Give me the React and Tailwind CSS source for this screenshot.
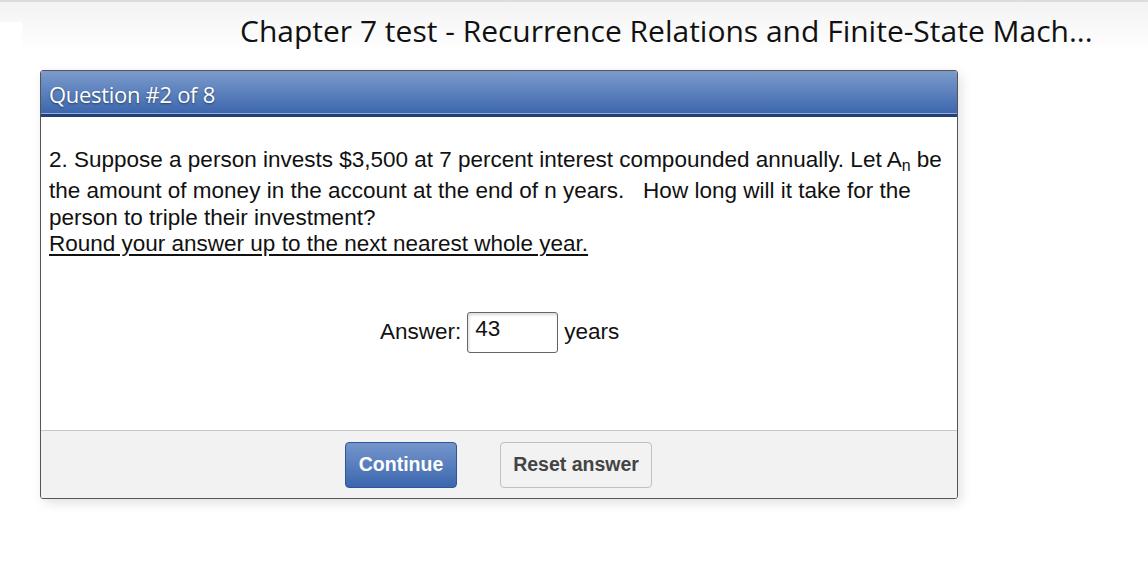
import React from "react";

export default function App() {
  return (
    <div className="w-[1148px] h-[566px] bg-white relative overflow-hidden" style={{ fontFamily: "Arial, 'Liberation Sans', sans-serif" }}>
      <div className="h-[2px] bg-[#dcdcdc]" />
      <div className="h-[48px] bg-gradient-to-b from-[#f3f3f3] to-white flex items-start relative">
        <div className="absolute left-0 top-[20px] w-[22px] h-[26px] bg-white" />
        <h1 className="ml-[240px] mt-[10px] text-[30px] leading-[38px] text-[#111] font-['Open_Sans','Noto_Sans',sans-serif] whitespace-nowrap">
          Chapter 7 test - Recurrence Relations and Finite-State Mach...
        </h1>
      </div>

      <div className="ml-[40px] mt-[20px] w-[918px] h-[429px] border border-[#555] rounded-[3px] shadow-[3px_4px_12px_rgba(0,0,0,0.12)] flex flex-col overflow-hidden">
        <div className="h-[46px] shrink-0 bg-gradient-to-b from-[#7b9bcb] to-[#3c66ad] border-b-[3px] border-[#243f77] relative flex items-center">
          <div className="absolute left-0 right-0 bottom-0 h-[1px] bg-[#8fb0df]" />
          <span className="ml-[8px] mt-[3px] text-white text-[22px] tracking-[-0.3px] font-['Open_Sans','Noto_Sans',sans-serif] [text-shadow:0_1px_2px_rgba(0,0,0,0.45)]">
            Question #2 of 8
          </span>
        </div>

        <div className="flex-1 bg-white px-[8px] pt-[30px] text-[22.5px] text-[#111] leading-[26.5px]">
          <p>
            2. Suppose a person invests $3,500 at 7 percent interest compounded annually. Let A<sub className="text-[16px] leading-none align-[-8px] relative -top-[4px] bottom-auto">n</sub> be the amount of money in the account at the end of n years.&nbsp;&nbsp; How long will it take for the person to triple their investment?
          </p>
          <p className="underline underline-offset-[3px]">Round your answer up to the next nearest whole year.</p>
          <div className="mt-[54px] ml-[331px] flex items-center gap-[6px]">
            <span>Answer:</span>
            <div className="w-[91px] h-[41px] border border-[#666] rounded-[3px] shadow-[inset_1px_2px_3px_rgba(0,0,0,0.15)] px-[7px] pt-[3px] text-left leading-[26px]">43</div>
            <span>years</span>
          </div>
        </div>

        <div className="h-[68px] shrink-0 bg-[#f2f2f2] border-t border-[#c8c8c8] flex items-start pt-[11px]">
          <button className="ml-[304px] w-[112px] h-[46px] rounded-[4px] border border-[#2e5597] bg-gradient-to-b from-[#7596cb] to-[#3b66ae] text-white font-bold text-[19.5px]">
            Continue
          </button>
          <button className="ml-[43px] w-[152px] h-[46px] rounded-[4px] border border-[#c0c0c0] bg-[#f2f2f2] text-[#444] font-bold text-[19.5px]">
            Reset answer
          </button>
        </div>
      </div>
    </div>
  );
}
